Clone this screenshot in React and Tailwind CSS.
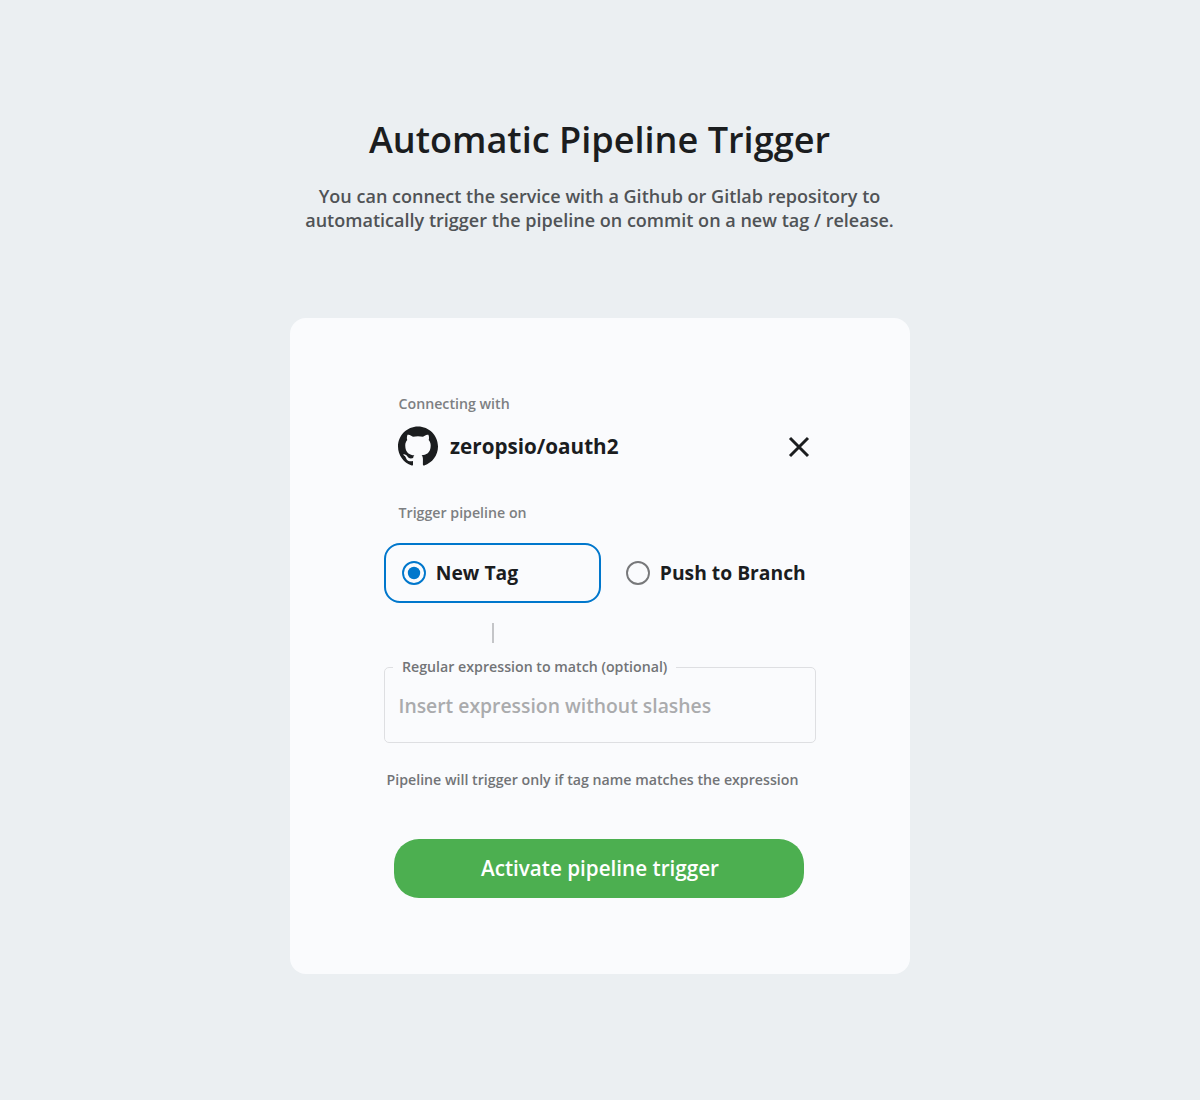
import { SiGithub } from "react-icons/si";

function Radio({ checked }) {
  return (
    <svg viewBox="0 0 24 24" className="size-6 shrink-0">
      <circle cx="12" cy="12" r="11" fill="none" strokeWidth="1.9" className={checked ? "stroke-[#0077cc]" : "stroke-[#77787a]"} />
      {checked && <circle cx="12" cy="12" r="6.2" className="fill-[#0077cc]" />}
    </svg>
  );
}

function Option({ label, checked, className }) {
  return (
    <button className={`flex h-[60px] items-center rounded-[16px] border-2 text-[19.3px] font-bold leading-6 whitespace-nowrap text-[#1b1d1f] ${className}`}>
      <Radio checked={checked} />
      <span className="ml-[9.5px]">{label}</span>
    </button>
  );
}

function Header() {
  return (
    <header className="flex flex-col items-center text-center">
      <h1 className="-ml-px text-[36.1px] font-semibold leading-[48px] text-[#1b1d1f]">Automatic Pipeline Trigger</h1>
      <p className="-ml-px mt-[21px] text-[18.05px] font-semibold leading-[24px] text-[#505356]">
        You can connect the service with a Github or Gitlab repository to
        <br />
        automatically trigger the pipeline on commit on a new tag / release.
      </p>
    </header>
  );
}

export default function App() {
  return (
    <div className="flex h-[1100px] w-[1200px] flex-col items-center bg-[#ebeff2] pt-[115px] font-['Open_Sans',sans-serif]">
      <Header />
      <main className="mt-[86px] h-[656px] w-[620px] rounded-[16px] bg-[#fafbfd] px-[94px] pt-[76px]">
        <p className="pl-[14.5px] text-[14.2px] font-semibold leading-5 text-[#7d7f82]">Connecting with</p>
        <div className="mt-3 flex h-10 items-center pl-[14px] pr-[7px]">
          <SiGithub className="size-10 text-[#1b1d1f]" />
          <span className="ml-[12px] text-[20.65px] font-bold leading-7 text-[#1b1d1f]">zeropsio/oauth2</span>
          <button className="ml-auto" aria-label="Disconnect">
            <svg viewBox="0 0 20 20" className="mt-[2px] size-5 overflow-visible stroke-[#1b1d1f]" fill="none" strokeWidth="3">
              <path d="M1 1 19 19M19 1 1 19" />
            </svg>
          </button>
        </div>
        <p className="mt-[37px] pl-[14.5px] text-[14.2px] font-semibold leading-5 text-[#7d7f82]">Trigger pipeline on</p>
        <div className="mt-[19.5px] flex">
          <Option label="New Tag" checked className="w-[216.5px] border-[#0077cc] pl-[16.3px]" />
          <Option label="Push to Branch" className="ml-2 border-transparent pl-[15.8px]" />
        </div>
        <div className="ml-[108px] mt-[20.5px] h-5 w-[2px] bg-[#c4c5c8]" />
        <fieldset className="mt-[14px] h-[85.5px] rounded-[5px] border border-[#dedfe2] pl-[8px]">
          <legend className="px-[9px] text-[14.2px] font-semibold leading-5 text-[#727477]">Regular expression to match (optional)</legend>
          <input placeholder="Insert expression without slashes" className="mt-[14px] ml-[5.5px] block h-7 w-[400px] bg-transparent text-[19.35px] font-semibold outline-none placeholder:text-[#aaabad]" />
        </fieldset>
        <p className="mt-[27px] pl-[2.5px] text-[14.2px] font-semibold leading-5 text-[#727477]">Pipeline will trigger only if tag name matches the expression</p>
        <button className="ml-[10px] mt-[49.5px] block h-[59px] w-[410px] rounded-[25px] bg-[#4caf50] pb-px pl-[2px] text-[20.65px] font-semibold leading-7 text-white">Activate pipeline trigger</button>
      </main>
    </div>
  );
}
